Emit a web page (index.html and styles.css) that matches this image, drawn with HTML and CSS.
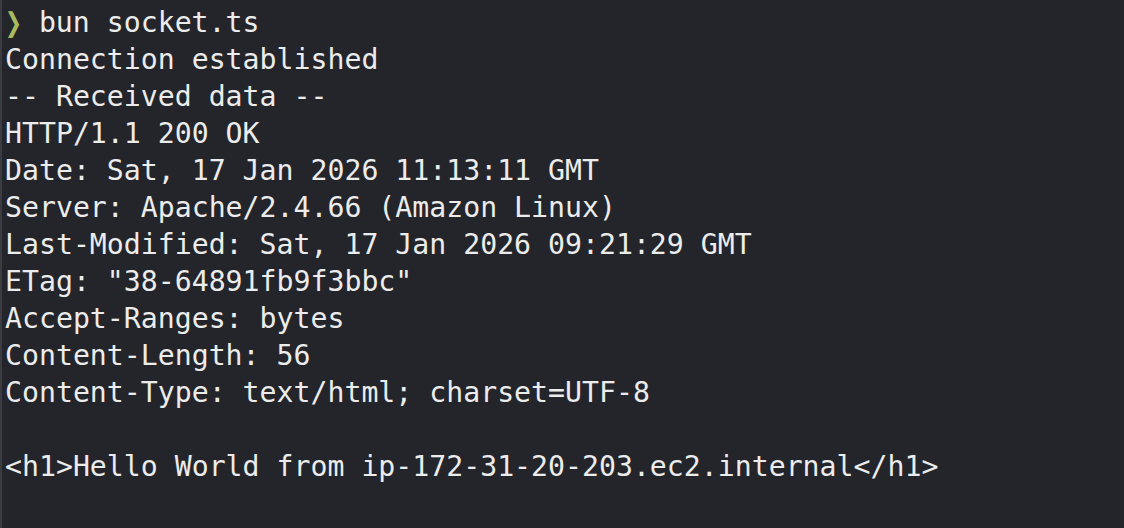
FILE: index.html
```html
<!DOCTYPE html>
<html>
<head>
<meta charset="utf-8">
<link rel="stylesheet" href="styles.css">
</head>
<body>
<div class="term">
<div class="line"><span class="prompt">❯</span> bun socket.ts</div>
<div class="line">Connection established</div>
<div class="line">-- Received data --</div>
<div class="line">HTTP/1.1 200 OK</div>
<div class="line">Date: Sat, 17 Jan 2026 11:13:11 GMT</div>
<div class="line">Server: Apache/2.4.66 (Amazon Linux)</div>
<div class="line">Last-Modified: Sat, 17 Jan 2026 09:21:29 GMT</div>
<div class="line">ETag: "38-64891fb9f3bbc"</div>
<div class="line">Accept-Ranges: bytes</div>
<div class="line">Content-Length: 56</div>
<div class="line">Content-Type: text/html; charset=UTF-8</div>
<div class="line"> </div>
<div class="line">&lt;h1&gt;Hello World from ip-172-31-20-203.ec2.internal&lt;/h1&gt;</div>
</div>
</body>
</html>
```
FILE: styles.css
```css
html, body {
  margin: 0;
  padding: 0;
  background: #23252b;
}
.term {
  width: 1124px;
  height: 528px;
  box-sizing: border-box;
  border-left: 2px solid #3a3c42;
  padding: 4px 0 0 3px;
  font-family: "DejaVu Sans Mono", "Liberation Mono", monospace;
  font-size: 28.2px;
  line-height: 37px;
  color: #ececec;
  overflow: hidden;
}
.line {
  height: 37px;
  white-space: pre;
}
.prompt {
  display: inline-block;
  width: 0.6em;
  color: #a9ba5e;
  font-weight: bold;
  transform: scaleY(1.3);
}
```
